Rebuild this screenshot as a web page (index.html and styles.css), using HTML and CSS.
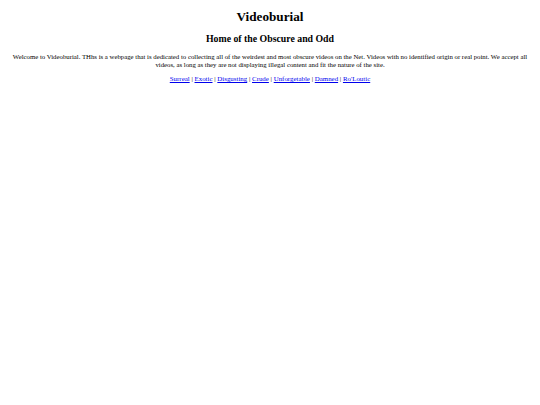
FILE: index.html
```html
<!DOCTYPE html>
<html>
<head>
<meta charset="utf-8">
<title>Videoburial</title>
<link rel="stylesheet" href="styles.css">
</head>
<body>
<div class="page">
<h1 class="title">Videoburial</h1>
<h2 class="subtitle">Home of the Obscure and Odd</h2>
<p class="intro">Welcome to Videoburial. THhs is a webpage that is dedicated to collecting all of the weirdest and most obscure videos on the Net. Videos with no identified origin or real point. We accept all videos, as long as they are not displaying illegal content and fit the nature of the site.</p>
<p class="nav"><a href="#">Surreal</a> | <a href="#">Exotic</a> | <a href="#">Disgusting</a> | <a href="#">Crude</a> | <a href="#">Unforgetable</a> | <a href="#">Damned</a> | <a href="#">Ro'Loutic</a></p>
</div>
</body>
</html>
```

FILE: styles.css
```css
html, body {
  margin: 0;
  padding: 0;
  background: #ffffff;
}
.page {
  padding: 3px;
  font-family: "Liberation Serif", "Times New Roman", serif;
  font-size: 6.9px;
  line-height: 7.5px;
  color: #000000;
  text-align: center;
}
.title {
  font-size: 13.2px;
  line-height: 15.2px;
  font-weight: bold;
  margin: 6.2px 0 9px;
}
.subtitle {
  font-size: 9.8px;
  line-height: 11.3px;
  font-weight: bold;
  margin: 9px 0 8.5px;
}
.intro {
  font-size: 6.77px;
  margin: 8.5px 0 7px;
}
.nav {
  margin: 7px 0;
}
.nav a {
  color: #0000ee;
  text-decoration: underline;
}
```
